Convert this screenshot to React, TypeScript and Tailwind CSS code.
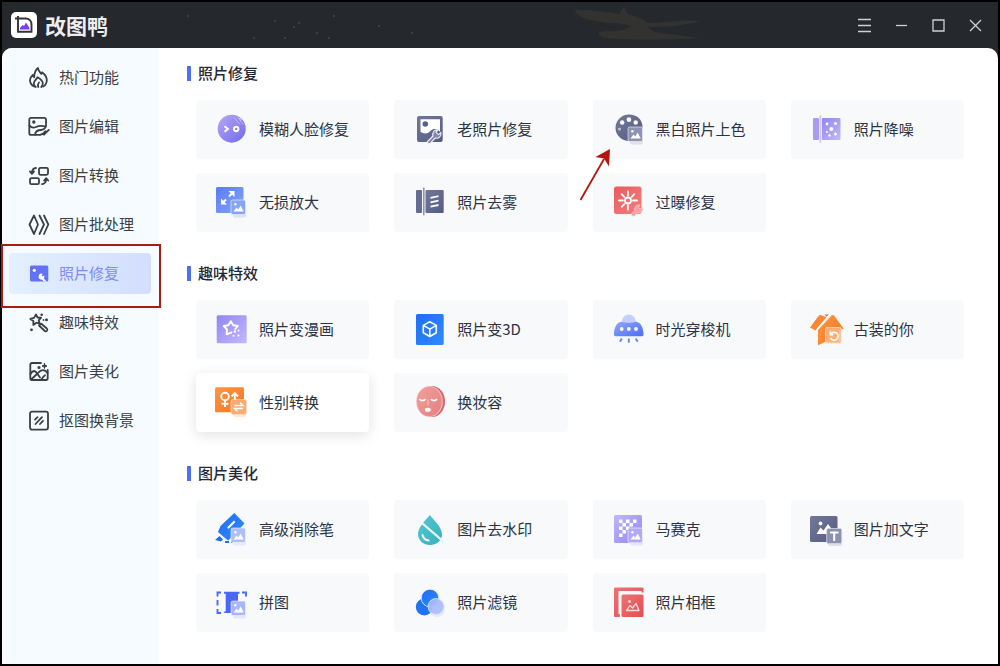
import type { ReactNode } from "react";

type Tool = { name: string; icon: ReactNode; raised?: boolean };
type Section = { title: string; tools: Tool[] };
type NavItem = { name: string; icon: ReactNode; active?: boolean };

function Gradients() {
  const stops: [string, string, string][] = [
    ["violet", "#b9a6f8", "#6f6ae8"],
    ["slate", "#72779b", "#565c83"],
    ["indigo", "#5a7bf3", "#86a7f7"],
    ["lilac", "#9086f0", "#c3b8fb"],
    ["lilacDown", "#c0b6fc", "#9385f3"],
    ["red", "#ea5c5c", "#f08080"],
    ["azure", "#1f6df5", "#2f8bff"],
    ["ufo", "#8fa6fb", "#4c6df6"],
    ["orange", "#ff9445", "#f9761c"],
    ["teal", "#52c8d3", "#3bb0bd"],
    ["skin", "#f0a19d", "#e57f81"],
    ["frame", "#ee7273", "#e54c52"],
  ];
  return (
    <svg width="0" height="0" className="absolute" aria-hidden="true">
      <defs>
        {stops.map(([id, from, to]) => (
          <linearGradient key={id} id={id} x1="0" y1="0" x2="1" y2="1">
            <stop offset="0" stopColor={from} />
            <stop offset="1" stopColor={to} />
          </linearGradient>
        ))}
      </defs>
    </svg>
  );
}

function ToolIcon({ children }: { children: ReactNode }) {
  return (
    <svg viewBox="0 0 36 35" className="h-[35px] w-9 shrink-0" fill="none" aria-hidden="true">
      {children}
    </svg>
  );
}

function NavIcon({ children }: { children: ReactNode }) {
  return (
    <svg
      viewBox="0 0 22 22"
      className="size-[22px] shrink-0"
      fill="none"
      stroke="currentColor"
      strokeWidth="1.8"
      strokeLinecap="round"
      strokeLinejoin="round"
      aria-hidden="true"
    >
      {children}
    </svg>
  );
}

function PhotoBadge({ fill, y = 15 }: { fill: string; y?: number }) {
  return (
    <g>
      <rect x="20" y={y + 3} width="13" height="14.5" rx="2" fill={fill} opacity="0.25" />
      <rect x="18" y={y} width="14.5" height="14.5" rx="1.5" fill={fill} stroke="#fff" strokeOpacity="0.55" />
      <circle cx="22.4" cy={y + 4.2} r="1.2" fill="#fff" />
      <path d={`M20.5 ${y + 11.5}l3-4 1.8 2 2.4-4 3 6z`} fill="#fff" />
    </g>
  );
}

const sections: Section[] = [
  {
    title: "照片修复",
    tools: [
      {
        name: "模糊人脸修复",
        icon: (
          <ToolIcon>
            <circle cx="18.7" cy="16.7" r="14" fill="url(#violet)" />
            <path d="M11.5 14.3l3.500 2.700-3.500 2.700" stroke="#fff" strokeWidth="1.9" />
            <circle cx="23.2" cy="17" r="2.200" stroke="#fff" strokeWidth="1.9" />
            <path d="M21 5.5l6 7M24.5 5l6 7.500M28 4.500v4M26 6.500h4" stroke="#e3dcff" strokeWidth="1" opacity="0.6" />
          </ToolIcon>
        ),
      },
      {
        name: "老照片修复",
        icon: (
          <ToolIcon>
            <rect x="6" y="4" width="25.7" height="26" rx="2" fill="url(#slate)" />
            <path d="M9.5 7.3H29v12.5c-3-3.4-6.6-3.6-9.5-.8-3 3-6.300 3.400-10 .8z" fill="#fff" />
            <circle cx="14.3" cy="12" r="2.8" fill="#5c6288" />
            <path
              d="M16.500 29.500l5.500-5.500c-1-3.500 1.300-6.500 4.800-6.100l-1.800 2.400 2.400 2.300 2.500-2c.8 3.800-2.300 6.300-5.700 5.500l-5 5.300c-1.800.8-3.500-.6-2.700-1.900z"
              fill="#8489aa"
              stroke="#f0f1f7"
              strokeWidth="1.100"
            />
          </ToolIcon>
        ),
      },
      {
        name: "黑白照片上色",
        icon: (
          <ToolIcon>
            <path
              d="M19 2.500c8 0 13.500 5.500 13.500 12 0 5-4 5.500-7 5.500-4 0-5.500 2-4.500 4.500 1 3 0 5-3 4.500C10.500 28 5.500 22.500 5.500 16 5.500 8.500 11.500 2.500 19 2.500z"
              fill="url(#slate)"
            />
            <g fill="#fff">
              <circle cx="12.200" cy="10.500" r="2.200" />
              <circle cx="18.900" cy="7.700" r="2.400" />
              <circle cx="25.700" cy="10.500" r="2.200" />
              <circle cx="9.500" cy="17" r="1.500" opacity="0.6" />
            </g>
            <PhotoBadge fill="#8e93b3" />
          </ToolIcon>
        ),
      },
      {
        name: "照片降噪",
        icon: (
          <ToolIcon>
            <rect x="5" y="6" width="6" height="22" rx="1" fill="#a99cf7" />
            <rect x="11.500" y="3" width="1.800" height="28" rx=".9" fill="#cfc6ff" />
            <rect x="14" y="6" width="18.500" height="22" rx="1" fill="url(#lilac)" />
            <g fill="#fff">
              <circle cx="23.300" cy="17" r="2" />
              <circle cx="19" cy="12" r="1.400" />
              <circle cx="27.500" cy="11.500" r="1.500" />
              <circle cx="19" cy="20" r="1.100" />
              <circle cx="21.500" cy="23.500" r="1.200" />
              <circle cx="27.500" cy="22" r="1.500" />
            </g>
          </ToolIcon>
        ),
      },
      {
        name: "无损放大",
        icon: (
          <ToolIcon>
            <rect x="3" y="2" width="27.500" height="26" rx="1.500" fill="url(#indigo)" />
            <path d="M15.500 6h6v6zM8 13.500v6h6z" fill="#fff" />
            <path d="M20 7.500l-4 4M9.500 18l3.500-3.500" stroke="#fff" strokeWidth="2" />
            <PhotoBadge fill="#86a5f5" />
          </ToolIcon>
        ),
      },
      {
        name: "照片去雾",
        icon: (
          <ToolIcon>
            <rect x="5" y="5" width="6" height="23" rx="1" fill="#656b92" />
            <rect x="12" y="2.500" width="1.600" height="28" rx=".8" fill="#8d92b3" />
            <rect x="14.500" y="5" width="18.200" height="23" rx="1" fill="url(#slate)" />
            <path d="M19.500 12.900l8-1.700M19.500 17.300l8-1.700M19.500 21.700l8-1.700" stroke="#fff" strokeWidth="1.800" />
          </ToolIcon>
        ),
      },
      {
        name: "过曝修复",
        icon: (
          <ToolIcon>
            <rect x="4" y="1.500" width="27.500" height="27.500" rx="2.500" fill="url(#red)" />
            <circle cx="18" cy="15.500" r="3" stroke="#fff" strokeWidth="1.800" />
            <path
              d="M18 6.500v4M18 20.500v4M9 15.500h4M23 15.500h4M11.700 9.200l2.600 2.600M24.300 9.200l-2.600 2.600M11.700 21.800l2.600-2.600"
              stroke="#fff"
              strokeWidth="1.800"
              strokeLinecap="round"
            />
            <path
              d="M21.500 29l3.300-3.500c-.7-3.500 2-6 5.200-5.500l-1.500 2.300 1.800 1.800 2.400-1.500c.8 3.500-2 5.500-5 5l-3.200 3.300c-1.600.8-3.500-.4-3-1.900z"
              fill="#f4a0a0"
              stroke="#fbd3d3"
              strokeWidth=".8"
            />
          </ToolIcon>
        ),
      },
    ],
  },
  {
    title: "趣味特效",
    tools: [
      {
        name: "照片变漫画",
        icon: (
          <ToolIcon>
            <rect x="3.700" y="3.300" width="30" height="28" rx="1.500" fill="url(#lilac)" />
            <path
              d="M18.500 20.500l-5 1.800.5-4.800-3.200-3.500 4.500-.8 2.500-4 2.500 4 4.500.8-2.500 3"
              stroke="#fff"
              strokeWidth="1.900"
              strokeLinejoin="round"
              strokeLinecap="round"
            />
            <g fill="#fff">
              <circle cx="25.500" cy="18.500" r="1" />
              <circle cx="21.800" cy="19.500" r="1.200" />
              <circle cx="25.500" cy="23.500" r="1.100" />
              <circle cx="20.500" cy="23.800" r="1" />
            </g>
          </ToolIcon>
        ),
      },
      {
        name: "照片变3D",
        icon: (
          <ToolIcon>
            <rect x="5" y="2" width="27.700" height="31" rx="1.500" fill="url(#azure)" />
            <path
              d="M18.800 9.700l6.500 3.700v7.400l-6.500 3.700-6.500-3.700v-7.400zM12.300 13.400l6.500 3.700 6.500-3.700M18.800 17.100v7.400"
              stroke="#fff"
              strokeWidth="1.600"
              strokeLinejoin="round"
            />
          </ToolIcon>
        ),
      },
      {
        name: "时光穿梭机",
        icon: (
          <ToolIcon>
            <path d="M11.500 12c0-6 3-9.500 7.300-9.500S26.100 6 26.100 12z" fill="#c3cfff" />
            <path
              d="M11.500 9.800c4.500 1.500 10 1.500 14.500 0 5 .7 7.500 6.200 7.500 12.700 0 1-.5 1.700-1.500 1.700H5.600c-1 0-1.600-.7-1.600-1.700 0-6.500 2.500-12 7.500-12.700z"
              fill="url(#ufo)"
            />
            <g fill="#fff">
              <circle cx="11.700" cy="17" r="1.900" />
              <circle cx="18.800" cy="17" r="1.900" />
              <circle cx="26" cy="17" r="1.900" />
            </g>
            <path d="M11.800 26.500l-1.800 3.200M18.800 26.500v4.200M25.800 26.500l1.800 3.200" stroke="#6a84f5" strokeWidth="1.900" />
          </ToolIcon>
        ),
      },
      {
        name: "古装的你",
        icon: (
          <ToolIcon>
            <path d="M2 15.500L10.500 4c.8-1.100 1.800-1.400 2.800-.8l5.500 2L7.500 18.500z" fill="#fb8636" />
            <path d="M16.500 2.500h4.500l-2.200 2.300z" fill="#e0702a" />
            <path
              d="M10 18L23.500 3.500c.8-.8 1.800-.8 2.600 0L35.500 16.500l-4.500 2-.5 11H18l-8 3.700z"
              fill="url(#orange)"
            />
            <path d="M21 3.500L8.500 17.800" stroke="#fff" strokeWidth="1.200" />
            <rect x="17.500" y="15.500" width="16" height="16" rx="2" fill="#fbb988" opacity="0.8" stroke="#ffe4cf" />
            <path d="M22.300 19.500v3.200h3M22.500 22.500a4 4 0 1 1 0 3.500" stroke="#fff" strokeWidth="1.700" />
          </ToolIcon>
        ),
      },
      {
        name: "性别转换",
        raised: true,
        icon: (
          <ToolIcon>
            <rect x="2" y="2.300" width="29" height="25" rx="1.500" fill="url(#orange)" />
            <circle cx="12" cy="11.500" r="3.800" stroke="#fff" strokeWidth="1.900" />
            <path d="M12 15.500V22M8.500 18.800h7M21.800 16V9M18.500 11.500l3.300-3.300 3.300 3.300" stroke="#fff" strokeWidth="1.900" />
            <rect x="20" y="19" width="13" height="13" rx="2" fill="#fbb27e" opacity="0.3" />
            <rect x="18" y="14.500" width="15.500" height="15" rx="2" fill="#fbaa72" stroke="#ffdcc3" strokeWidth=".8" />
            <path d="M21.500 20.500h8.500l-3-2.800M30 23.500h-8.500l3 2.800" stroke="#fff" strokeWidth="1.500" />
          </ToolIcon>
        ),
      },
      {
        name: "换妆容",
        icon: (
          <ToolIcon>
            <ellipse cx="21" cy="16.500" rx="13" ry="15.500" fill="#d4666a" />
            <ellipse cx="18.500" cy="16.500" rx="13.300" ry="15.500" fill="#f7c5c0" />
            <ellipse cx="18.300" cy="16.500" rx="12.500" ry="14.700" fill="url(#skin)" />
            <path d="M8.500 14c1.500 2.200 4.500 2.200 6 0M20 14c1.500 2.200 4.500 2.200 6 0" stroke="#fff" strokeWidth="1.600" />
            <path d="M17 14.500v6" stroke="#f5b3ae" strokeWidth="1.500" />
            <ellipse cx="16.800" cy="24.800" rx="3" ry="2" fill="#fff" />
          </ToolIcon>
        ),
      },
    ],
  },
  {
    title: "图片美化",
    tools: [
      {
        name: "高级消除笔",
        icon: (
          <ToolIcon>
            <path d="M21.300 1l10.200 10.500L20 24l-5 4.500-10-8.500 2.500-6z" fill="url(#azure)" />
            <path d="M15.500 15.500l5.500-5.500" stroke="#fff" strokeWidth="2.200" strokeLinecap="round" />
            <path d="M2 28l4.500-4 3.500 3.500-2 2z" fill="#1f6df5" />
            <path d="M12 30h8" stroke="#1f6df5" strokeWidth="1.800" strokeDasharray="4 2" />
            <PhotoBadge fill="#aebefa" y={16} />
          </ToolIcon>
        ),
      },
      {
        name: "图片去水印",
        icon: (
          <ToolIcon>
            <path d="M18.800 3C22.500 8 31 15 31 22.500 31 28.500 25.500 33 19 33S7 28.500 7 22C7 15 15 8 18.800 3z" fill="url(#teal)" />
            <path d="M8 8.500L33 30" stroke="#f8f9fb" strokeWidth="2.200" />
            <path d="M12 11.500L33 31" stroke="#d7f2f4" strokeWidth="1.200" opacity=".8" />
            <path d="M11.500 23c.8 3.300 2.800 5 6 5.500" stroke="#fff" strokeWidth="2" strokeLinecap="round" />
          </ToolIcon>
        ),
      },
      {
        name: "马赛克",
        icon: (
          <ToolIcon>
            <rect x="4" y="3" width="28" height="28" rx="1.500" fill="url(#lilacDown)" />
            <path
              d="M9 7.500h3.500V11H9zM16 7.500h3.500V11H16zM23 7.500h3.500V11H23zM12.500 11H16v3.500h-3.500zM19.500 11H23v3.500h-3.500zM9 14.500h3.500V18H9zM16 14.500h3.500V18H16zM12.500 18H16v3.500h-3.500zM9 21.500h3.500V25H9z"
              fill="#fff"
            />
            <PhotoBadge fill="#b3a7f8" y={16} />
          </ToolIcon>
        ),
      },
      {
        name: "图片加文字",
        icon: (
          <ToolIcon>
            <rect x="2" y="4" width="27.500" height="26" rx="1.500" fill="url(#slate)" />
            <circle cx="12.500" cy="11.500" r="1.900" fill="#fff" />
            <path d="M8.500 22l4-6.500 3 3 4.500-6.500 3 4v6z" fill="#fff" />
            <rect x="20" y="20" width="14" height="14" rx="2" fill="#8e93b3" opacity=".25" />
            <rect x="18.700" y="16.500" width="15" height="15" rx="1.500" fill="#8c91b0" stroke="#d5d7e4" strokeWidth=".8" />
            <path d="M22 20.500h8.500M26.200 20.500V29" stroke="#fff" strokeWidth="2" />
          </ToolIcon>
        ),
      },
      {
        name: "拼图",
        icon: (
          <ToolIcon>
            <path d="M8 7.500H4.500v4M4.500 15v5.500M4.500 24v4H8M29 7.500h4v4" stroke="#4d6bf5" strokeWidth="1.900" />
            <path d="M11 6.700h15.500v2H25V28H11.200v-1.500h1.500V8.700H11z" fill="#4967f3" />
            <PhotoBadge fill="#a9b6fb" y={16} />
          </ToolIcon>
        ),
      },
      {
        name: "照片滤镜",
        icon: (
          <ToolIcon>
            <circle cx="13.300" cy="22" r="8.500" fill="#2173f3" />
            <circle cx="19" cy="13" r="8.800" fill="url(#azure)" stroke="#f8f9fb" strokeWidth=".8" />
            <circle cx="26" cy="24" r="8" fill="#b9c6fb" opacity="0.3" />
            <circle cx="25" cy="21.500" r="8" fill="#abbcfa" fillOpacity=".92" stroke="#dfe6ff" strokeWidth=".8" />
          </ToolIcon>
        ),
      },
      {
        name: "照片相框",
        icon: (
          <ToolIcon>
            <path
              d="M5.500 2.500h26.500c1 0 1.500.5 1.500 1.500v3.500h-2V6H8.500v23h1.300v3H5.500C4.500 32 4 31.500 4 30.500V4c0-1 .5-1.500 1.500-1.500z"
              fill="url(#frame)"
            />
            <rect x="11.500" y="9.500" width="22" height="22.500" rx="1.500" fill="url(#frame)" />
            <circle cx="19.500" cy="16.500" r="1.400" fill="#fbdcdc" />
            <path d="M16.500 25.500l3.500-5 2.500 2.500 3.500-4.500 3 7z" stroke="#fbdcdc" strokeWidth="1.300" strokeLinejoin="round" />
          </ToolIcon>
        ),
      },
    ],
  },
];

const navItems: NavItem[] = [
  {
    name: "热门功能",
    icon: (
      <NavIcon>
        <path d="M6 19.500C3.200 18 2 15.800 2 13.300c0-2.300 1.300-4 2.900-5.300.2 1 .6 1.700 1.300 2.200C6.200 6 7.500 3 10 1c.3 3 2 4.300 3.300 5.800.4-.4.6-.9.7-1.500 2.600 2 4.800 4.800 4.800 8 0 2.700-1.300 4.900-3.600 6.200" />
        <path d="M7.800 20c-1.500-1-2.100-2.300-2-3.800.2-2.300 2.500-3.500 3.700-6 2.700 1.500 5.200 3.500 5.300 6.300 0 1.500-.6 2.700-1.600 3.500" />
        <path d="M10.300 20c-.8-1.500-.5-3 .7-4.500" />
      </NavIcon>
    ),
  },
  {
    name: "图片编辑",
    icon: (
      <NavIcon>
        <path d="M18 10V3.500c0-1-.7-1.700-1.700-1.700H3c-1 0-1.700.7-1.700 1.700v13.700c0 1 .7 1.700 1.700 1.700h9" />
        <circle cx="5.800" cy="6" r=".8" fill="currentColor" />
        <path d="M1.500 9.500c2 2.500 4 2.700 6.500 1.500 3-1.500 6-1.500 9.500-.5M7 18.500c.5-3 3-4.500 6-4.500 2 0 3.500-1 4.500-2.500M12.500 18.700c2.500 0 3.500-1.700 5-3.500M16 18.700l4.800-4.800" />
      </NavIcon>
    ),
  },
  {
    name: "图片转换",
    icon: (
      <NavIcon>
        <rect x="11" y="2.800" width="9" height="7" rx="1.500" />
        <rect x="2" y="13.200" width="9" height="6" rx="1.500" />
        <path d="M8 3C5.300 3.200 4 4.500 3.900 8M1.900 6.500l2 2.300 2.100-2.300M14 19.200c2.800-.2 4-1.700 4.200-5.200M16.100 15.500l2.100-2.300 2 2.300" />
      </NavIcon>
    ),
  },
  {
    name: "图片批处理",
    icon: (
      <NavIcon>
        <path d="M6 1.500l4 9-4 9.500-4.500-9.500zM11.500 1.500l4.500 9-4.500 9.500M16 1.500l4.300 9L16 20" />
      </NavIcon>
    ),
  },
  {
    name: "照片修复",
    active: true,
    icon: (
      <svg viewBox="0 0 22 22" className="size-[22px] shrink-0" aria-hidden="true">
        <rect x="2" y="2.500" width="18.300" height="16" rx="1.500" fill="#6271f6" />
        <circle cx="6.300" cy="7.300" r="1.600" fill="#fff" />
        <path
          d="M11.300 11.200c1-.9 2.500-1 3.600-.1l-1.300 1.200 1 1.300 1.500-1c.5 1.100.3 2.200-.4 2.900l3 3h-3l-1.600-1.900c-2 .3-3.800-1-3.500-3.300z"
          fill="#fff"
        />
      </svg>
    ),
  },
  {
    name: "趣味特效",
    icon: (
      <NavIcon>
        <path d="M8 2.500l1.500 3 3.600.2-2.400 2.700 1.200 3.600-3.500-1.300-3.100 2.200.1-3.800-3.100-2.200 3.700-1z" />
        <path d="M11 13.500l2.300-1.700 5.500 4.700c1.500 1.500-.4 3.700-2 2.500z" />
        <g fill="currentColor" stroke="none">
          <circle cx="13.700" cy="2.800" r="1.300" />
          <circle cx="18.500" cy="7.800" r="1.500" />
          <circle cx="3.500" cy="17.800" r="1.400" />
          <circle cx="15.500" cy="8" r=".9" />
        </g>
      </NavIcon>
    ),
  },
  {
    name: "图片美化",
    icon: (
      <NavIcon>
        <path d="M13 2H4c-1 0-1.700.7-1.700 1.700v13.600c0 1 .7 1.700 1.700 1.700h14c1 0 1.700-.7 1.700-1.700V9" />
        <path d="M2.500 13c2.500-4.500 5-3.500 7 0l2.500 3.500M3 18.500L8.500 13.500M10 12c3-3.800 7-4 9.500 0M13.500 18.500c1-2 2-3.500 3.500-4.300" />
        <path d="M16.500 2.500l.6 1.900 1.900.6-1.900.6-.6 1.900-.6-1.900L14 5l1.900-.6z" fill="currentColor" strokeWidth="1" />
        <circle cx="11" cy="6.500" r=".7" fill="currentColor" />
      </NavIcon>
    ),
  },
  {
    name: "抠图换背景",
    icon: (
      <NavIcon>
        <rect x="2" y="1.600" width="18" height="18" rx="2" />
        <path d="M7 9.700l2.500-2.500M7.500 14l6.500-6.800M12 14l3-3.200" />
      </NavIcon>
    ),
  },
];

function TitleBar() {
  return (
    <header className="relative flex h-[46px] shrink-0 items-center bg-[#25282d] pr-1 pl-[9px]">
      <svg viewBox="0 0 600 46" className="absolute top-0 left-[150px] h-[46px] w-[600px]" aria-hidden="true">
        <g fill="#44484e">
          <circle cx="36" cy="14" r="1" />
          <circle cx="123" cy="19" r="1" />
          <circle cx="147" cy="21" r="1" />
          <circle cx="142" cy="25" r="1" />
          <circle cx="102" cy="36" r="1" />
          <circle cx="133" cy="36" r="1" />
          <circle cx="165" cy="31" r="1" />
          <circle cx="177" cy="36" r="1" />
          <circle cx="182" cy="14" r="1" />
          <circle cx="227" cy="24" r="1" />
          <circle cx="260" cy="31" r="1" />
        </g>
        <path
          d="M423 8c14-1 29 2 44 4l5-8 4 8 14 5 6 4c18 0 32-4 52-2-14 5-36 6-53 6l8 5c16 2 26 4 46 6-34 2-66 2-96 0-8-3-9-6 0-7 14 1 20-1 26-5l-14-3c-20 0-42-5-42-13z"
          fill="#323331"
        />
      </svg>
      <div className="relative flex flex-1 items-center gap-2">
        <svg viewBox="0 0 26 26" className="size-[26px]" fill="none" aria-hidden="true">
          <rect width="26" height="26" rx="5" fill="#fff" />
          <path d="M4 6.500h10.500c3.700 0 6 2.500 6 6v7.200H7V4" stroke="#33333f" strokeWidth="1.900" />
          <path d="M9 17.500v-1.500l2.500-3 1.500 1 2-3.500 3.500 5.500v1.500z" fill="#7a3df0" />
        </svg>
        <h1 className="text-[21px] leading-[26px] font-bold text-[#eeeeef]">改图鸭</h1>
      </div>
      <div className="relative flex text-[#cfd0d2]">
        <WindowButton label="菜单" path="M1 1.500h13M1 7.500h13M1 13.500h13" />
        <WindowButton label="最小化" path="M2 7.500h11" />
        <WindowButton label="最大化" path="M2 2h11v11H2z" />
        <WindowButton label="关闭" path="M2 2l11 11M13 2L2 13" />
      </div>
    </header>
  );
}

function WindowButton({ label, path }: { label: string; path: string }) {
  return (
    <button type="button" aria-label={label} className="flex h-[46px] w-[37px] items-center justify-center">
      <svg viewBox="0 0 15 15" className="size-[15px]" fill="none" stroke="currentColor" strokeWidth="1.300" aria-hidden="true">
        <path d={path} />
      </svg>
    </button>
  );
}

function Sidebar() {
  return (
    <nav className="w-[157px] shrink-0 bg-[#f5fbfe] pt-[9px] pr-2 pl-[7px]">
      <ul className="flex flex-col gap-2">
        {navItems.map((item) => (
          <li key={item.name}>
            <a
              href="#"
              aria-current={item.active ? "page" : undefined}
              className={
                item.active
                  ? "flex h-[41px] items-center gap-[9px] rounded bg-linear-to-r from-[#e3f0fe] to-[#d3deff] pl-[19px] text-[15px] whitespace-nowrap text-[#7f8af8]"
                  : "flex h-[41px] items-center gap-[9px] rounded pl-[19px] text-[15px] whitespace-nowrap text-[#3b3f44]"
              }
            >
              {item.icon}
              {item.name}
            </a>
          </li>
        ))}
      </ul>
    </nav>
  );
}

function ToolCard({ tool }: { tool: Tool }) {
  return (
    <button
      type="button"
      className={
        tool.raised
          ? "flex h-[59px] items-center gap-[10px] rounded-sm bg-white pl-[17px] text-[15px] leading-5 whitespace-nowrap text-[#2b3445] shadow-[0_3px_14px_rgba(0,0,0,0.12)]"
          : "flex h-[59px] items-center gap-[10px] rounded-sm bg-[#f8f9fb] pl-[17px] text-[15px] leading-5 whitespace-nowrap text-[#2b3445]"
      }
    >
      {tool.icon}
      <span className="pb-0.5">{tool.name}</span>
    </button>
  );
}

export default function App() {
  return (
    <div className="relative flex min-h-screen flex-col border-2 border-black bg-[#25282d] font-['Noto_Sans_CJK_SC',sans-serif]">
      <Gradients />
      <TitleBar />
      <div className="flex flex-1 overflow-hidden rounded-t-[10px] bg-white">
        <Sidebar />
        <main className="flex min-w-0 flex-1 flex-col gap-[31px] pt-[15px] pr-[34px] pb-5 pl-7">
          {sections.map((section) => (
            <section key={section.title} className="flex flex-col gap-[17px]">
              <h2 className="flex h-5 items-center gap-[7px] text-[15px] leading-5 font-medium text-[#1f2937]">
                <span className="h-[15px] w-1 bg-[#4c6ffa]" />
                {section.title}
              </h2>
              <div className="grid grid-cols-4 gap-x-[25px] gap-y-[14px] pl-[9px]">
                {section.tools.map((tool) => (
                  <ToolCard key={tool.name} tool={tool} />
                ))}
              </div>
            </section>
          ))}
        </main>
      </div>
      <div className="pointer-events-none absolute top-[242px] -left-px h-16 w-40 border-2 border-[#a81c15]" />
      <svg
        viewBox="0 0 36 56"
        className="pointer-events-none absolute top-[145px] left-[576px] h-14 w-9"
        fill="none"
        aria-hidden="true"
      >
        <path d="M2.500 53L26 12" stroke="#b5150f" strokeWidth="1.800" />
        <path d="M32 2L17.500 10l8.500 1.500 5 8z" fill="#b5150f" />
      </svg>
    </div>
  );
}
